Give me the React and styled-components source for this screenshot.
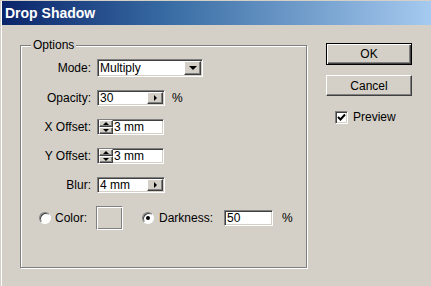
import React from "react";
import styled, { createGlobalStyle, css } from "styled-components";

const Global = createGlobalStyle`
  html, body { margin: 0; padding: 0; background: #d4d0c8; }
  body { font-family: "Liberation Sans", Arial, sans-serif; font-size: 12px; color: #000; }
`;

const sunken = css`
  border: 1px solid;
  border-color: #808080 #ffffff #ffffff #808080;
  box-shadow: inset 1px 1px 0 #404040, inset -1px -1px 0 #d4d0c8;
`;

const raised = css`
  border: 1px solid;
  border-color: #ffffff #404040 #404040 #ffffff;
  box-shadow: inset -1px -1px 0 #808080, inset 1px 1px 0 #d4d0c8;
  background: #d4d0c8;
`;

const Window = styled.div`
  width: 431px;
  height: 286px;
  box-sizing: border-box;
  border-left: 1px solid #d4d0c8;
  border-top: 1px solid #d4d0c8;
  box-shadow: inset 1px 1px 0 #ffffff;
  padding-left: 1px;
  display: flex;
  flex-direction: column;
  overflow: hidden;
`;

const TitleBar = styled.div`
  height: 24px;
  flex: none;
  background: linear-gradient(to right, #0a246a 0%, #3a6ea5 40%, #a6caf0 100%);
  color: #fff;
  font-weight: bold;
  font-size: 14px;
  display: flex;
  align-items: center;
  padding-left: 3px;
`;

const Body = styled.div`
  display: flex;
  align-items: flex-start;
  padding: 18px 0 0 18px;
  gap: 19px;
`;

const Group = styled.div`
  position: relative;
  margin-top: 2px;
  width: 287px;
  height: 223px;
  box-sizing: border-box;
  border: 1px solid #808080;
  box-shadow: inset 1px 1px 0 #ffffff, 1px 1px 0 #ffffff;
  padding-top: 13px;
`;

const Legend = styled.span`
  position: absolute;
  top: -8px;
  left: 10px;
  padding: 0 2px;
  line-height: 14px;
  background: #d4d0c8;
`;

const Form = styled.div`
  display: grid;
  grid-template-columns: 70px auto;
  grid-auto-rows: 16px;
  grid-template-rows: 18px;
  column-gap: 6px;
  row-gap: 13px;
`;

const Label = styled.div`
  text-align: right;
  align-self: center;
  line-height: 14px;
`;

const Cell = styled.div`
  display: flex;
  align-items: center;
  gap: 7px;
`;

const Field = styled.div`
  ${sunken};
  box-sizing: border-box;
  width: ${(p) => p.$w}px;
  height: ${(p) => p.$h || 16}px;
  background: #fff;
  display: flex;
  align-items: center;
  padding: 0 ${(p) => (p.$btn ? 1 : 2)}px 0 2px;
  line-height: 14px;
`;

const FieldText = styled.span`
  flex: 1;
`;

const SmallBtn = styled.div`
  ${raised};
  box-sizing: border-box;
  width: ${(p) => p.$w}px;
  height: ${(p) => p.$h}px;
  display: flex;
  align-items: center;
  justify-content: center;
  flex: none;
`;

const SpinWrap = styled.div`
  display: flex;
  flex-direction: column;
  margin-left: -1px;
  margin-right: 1px;
  height: 14px;
`;

const ColorRow = styled.div`
  display: flex;
  align-items: center;
  height: 24px;
  margin-top: 13px;
  padding-left: 18px;
`;

const Radio = styled.div`
  width: 12px;
  height: 12px;
  box-sizing: border-box;
  border-radius: 50%;
  border: 1px solid;
  border-color: #808080 #ffffff #ffffff #808080;
  box-shadow: inset 1px 1px 0 #404040;
  background: #ffffff;
  display: flex;
  align-items: center;
  justify-content: center;
  flex: none;
  margin-right: ${(p) => p.$gap}px;
  &::after {
    content: "";
    width: 4px;
    height: 4px;
    border-radius: 50%;
    background: ${(p) => (p.$checked ? "#000" : "transparent")};
  }
`;

const Text = styled.span`
  line-height: 14px;
  margin-right: ${(p) => p.$mr || 0}px;
  margin-left: ${(p) => p.$ml || 0}px;
`;

const Swatch = styled.div`
  width: 27px;
  height: 24px;
  box-sizing: border-box;
  border: 1px solid;
  border-color: #808080 #ffffff #ffffff #808080;
  box-shadow: inset 1px 1px 0 #ffffff, inset -1px -1px 0 #808080;
  background: #d4d0c8;
  margin-right: 19px;
`;

const Side = styled.div`
  display: flex;
  flex-direction: column;
  width: 86px;
`;

const Button = styled.div`
  box-sizing: border-box;
  height: ${(p) => (p.$default ? 22 : 21)}px;
  display: flex;
  align-items: center;
  justify-content: center;
  ${raised};
  ${(p) =>
    p.$default &&
    css`
      border: 1px solid #000;
      box-shadow: inset 1px 1px 0 #ffffff, inset -1px -1px 0 #404040, inset -2px -2px 0 #808080;
    `}
  margin-bottom: ${(p) => p.$mb || 0}px;
`;

const CheckRow = styled.div`
  display: flex;
  align-items: center;
  gap: 5px;
  padding-left: 9px;
`;

const CheckBox = styled.div`
  ${sunken};
  width: 13px;
  height: 13px;
  box-sizing: border-box;
  background: #fff;
  display: flex;
  align-items: center;
  justify-content: center;
`;

const Tri = ({ dir, size = 3 }) => {
  const s = size;
  let pts;
  if (dir === "down") pts = `0,0 ${2 * s},0 ${s},${s}`;
  else if (dir === "up") pts = `0,${s} ${2 * s},${s} ${s},0`;
  else pts = `0,0 ${s},${s} 0,${2 * s}`;
  const w = dir === "right" ? s : 2 * s;
  const h = dir === "right" ? 2 * s : s;
  return (
    <svg width={w} height={h} viewBox={`0 0 ${w} ${h}`} style={{ display: "block" }}>
      <polygon points={pts} fill="#000" />
    </svg>
  );
};

const Spinner = () => (
  <SpinWrap>
    <SmallBtn $w={14} $h={7}>
      <Tri dir="up" size={3} />
    </SmallBtn>
    <SmallBtn $w={14} $h={7}>
      <Tri dir="down" size={3} />
    </SmallBtn>
  </SpinWrap>
);

export default function App() {
  return (
    <>
      <Global />
      <Window>
        <TitleBar>Drop Shadow</TitleBar>
        <Body>
          <Group>
            <Legend>Options</Legend>
            <Form>
              <Label>Mode:</Label>
              <Cell>
                <Field $w={106} $h={18} $btn>
                  <FieldText>Multiply</FieldText>
                  <SmallBtn $w={17} $h={14}>
                    <Tri dir="down" size={4} />
                  </SmallBtn>
                </Field>
              </Cell>

              <Label>Opacity:</Label>
              <Cell>
                <Field $w={68} $btn>
                  <FieldText>30</FieldText>
                  <SmallBtn $w={16} $h={12}>
                    <Tri dir="right" size={3} />
                  </SmallBtn>
                </Field>
                <Text>%</Text>
              </Cell>

              <Label>X Offset:</Label>
              <Cell>
                <Field $w={67}>
                  <Spinner />
                  <FieldText>3 mm</FieldText>
                </Field>
              </Cell>

              <Label>Y Offset:</Label>
              <Cell>
                <Field $w={67}>
                  <Spinner />
                  <FieldText>3 mm</FieldText>
                </Field>
              </Cell>

              <Label>Blur:</Label>
              <Cell>
                <Field $w={68} $btn>
                  <FieldText>4 mm</FieldText>
                  <SmallBtn $w={16} $h={12}>
                    <Tri dir="right" size={3} />
                  </SmallBtn>
                </Field>
              </Cell>
            </Form>

            <ColorRow>
              <Radio $gap={4} />
              <Text $mr={9}>Color:</Text>
              <Swatch />
              <Radio $gap={5} $checked />
              <Text $mr={11}>Darkness:</Text>
              <Field $w={49}>
                <FieldText>50</FieldText>
              </Field>
              <Text $ml={9}>%</Text>
            </ColorRow>
          </Group>

          <Side>
            <Button $default $mb={10}>OK</Button>
            <Button $mb={14}>Cancel</Button>
            <CheckRow>
              <CheckBox>
                <svg width="9" height="9" viewBox="0 0 9 9" style={{ display: "block" }}>
                  <path d="M1 4 L3.5 6.5 L8 1.5" stroke="#000" strokeWidth="2" fill="none" />
                </svg>
              </CheckBox>
              <Text>Preview</Text>
            </CheckRow>
          </Side>
        </Body>
      </Window>
    </>
  );
}
